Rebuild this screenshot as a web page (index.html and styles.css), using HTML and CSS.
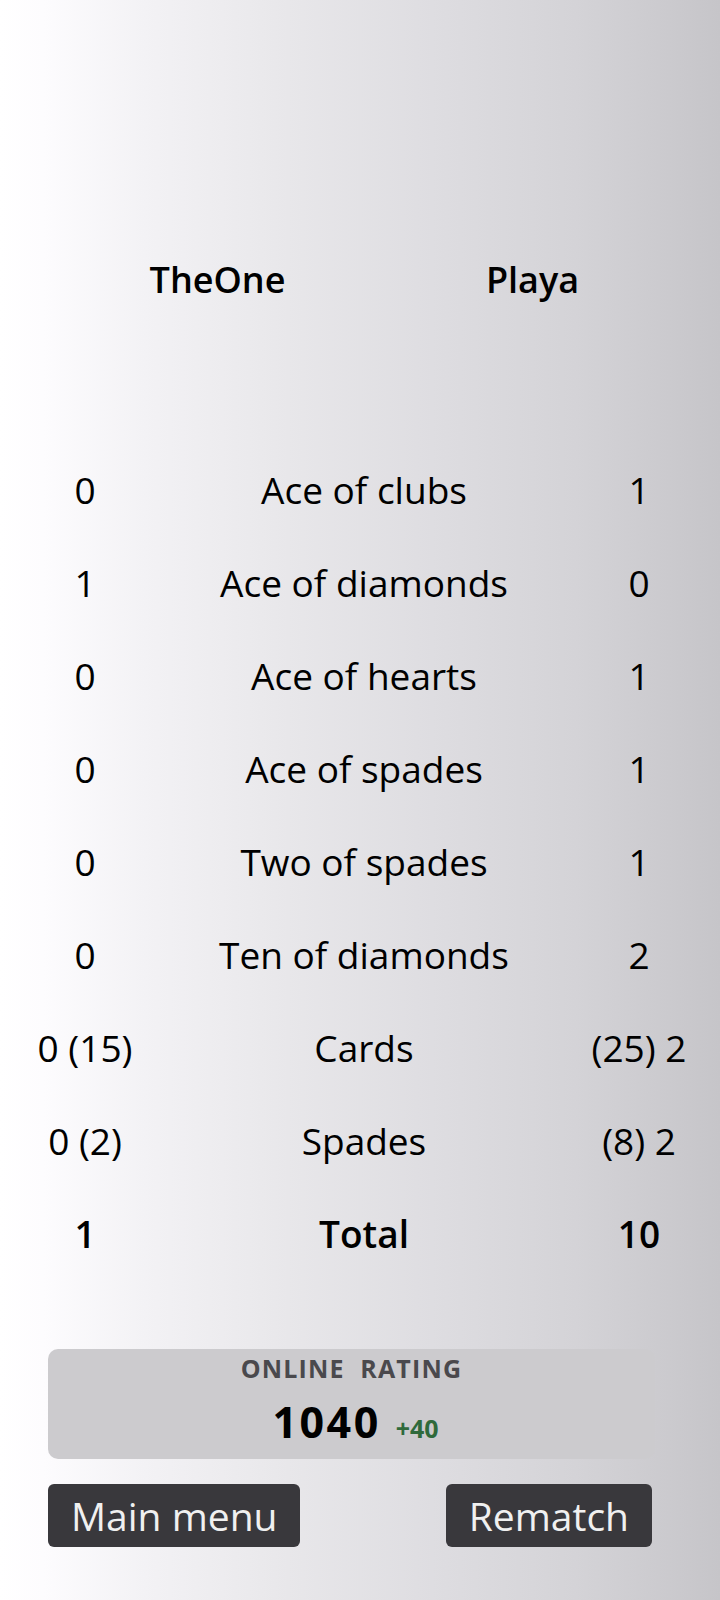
FILE: index.html
```html
<!DOCTYPE html>
<html lang="en">
<head>
<meta charset="utf-8">
<title>Score</title>
<link rel="stylesheet" href="styles.css">
</head>
<body>
<div class="page">
  <div class="names">
    <div class="name">TheOne</div>
    <div class="name">Playa</div>
  </div>
  <div class="table">
    <div class="cell">0</div><div class="cell">Ace of clubs</div><div class="cell">1</div>
    <div class="cell">1</div><div class="cell">Ace of diamonds</div><div class="cell">0</div>
    <div class="cell">0</div><div class="cell">Ace of hearts</div><div class="cell">1</div>
    <div class="cell">0</div><div class="cell">Ace of spades</div><div class="cell">1</div>
    <div class="cell">0</div><div class="cell">Two of spades</div><div class="cell">1</div>
    <div class="cell">0</div><div class="cell">Ten of diamonds</div><div class="cell">2</div>
    <div class="cell">0 (15)</div><div class="cell">Cards</div><div class="cell">(25) 2</div>
    <div class="cell">0 (2)</div><div class="cell">Spades</div><div class="cell">(8) 2</div>
    <div class="cell total">1</div><div class="cell total">Total</div><div class="cell total">10</div>
  </div>
  <div class="bottom">
    <div class="rating">
      <div class="rating-label">ONLINE&nbsp; RATING</div>
      <div class="rating-value"><span class="rating-num">1040</span><span class="rating-delta">+40</span></div>
    </div>
    <div class="buttons">
      <div class="btn">Main menu</div>
      <div class="btn">Rematch</div>
    </div>
  </div>
</div>
</body>
</html>
```

FILE: styles.css
```css
html, body {
  margin: 0;
  padding: 0;
}
body {
  font-family: "Open Sans", "Noto Sans", sans-serif;
  color: #000;
  background: linear-gradient(to right, #ffffff 0%, #fdfcfe 6%, #f3f2f5 20%, #e8e7ea 40%, #dedde1 60%, #d4d3d7 80%, #c6c5c9 100%);
  min-height: 1600px;
}
.page {
  min-height: 1600px;
  padding-top: 262px;
  box-sizing: border-box;
}
.names {
  display: grid;
  grid-template-columns: 1fr 1fr;
  padding: 0 30px 0 60px;
}
.name {
  text-align: center;
  font-size: 36px;
  line-height: 36px;
  font-weight: 600;
}
.table {
  margin-top: 145px;
  display: grid;
  grid-template-columns: 170px 1fr 162px;
  grid-auto-rows: 93px;
}
.cell {
  text-align: center;
  font-size: 37px;
  line-height: 93px;
  white-space: nowrap;
}
.total {
  font-weight: 600;
}
.bottom {
  margin-top: 69px;
  padding: 0 68px 0 48px;
}
.rating {
  background: #cccbce;
  border-radius: 10px;
  height: 110px;
  box-sizing: border-box;
  padding-top: 7px;
  margin-right: -3px;
  text-align: center;
}
.rating-label {
  font-size: 25px;
  line-height: 25px;
  font-weight: 700;
  letter-spacing: 1.2px;
  color: #4a494d;
}
.rating-value {
  margin-top: 19px;
  line-height: 43px;
  padding-left: 8px;
}
.rating-num {
  font-size: 43px;
  font-weight: 700;
  letter-spacing: 2.5px;
}
.rating-delta {
  font-size: 25px;
  font-weight: 700;
  color: #2f6a3b;
  margin-left: 15px;
}
.buttons {
  margin-top: 25px;
  display: flex;
  justify-content: space-between;
}
.btn {
  background: #39383c;
  color: #f0f0f0;
  border-radius: 6px;
  height: 63px;
  line-height: 63px;
  padding: 0 23px;
  font-size: 39px;
  white-space: nowrap;
}
```
